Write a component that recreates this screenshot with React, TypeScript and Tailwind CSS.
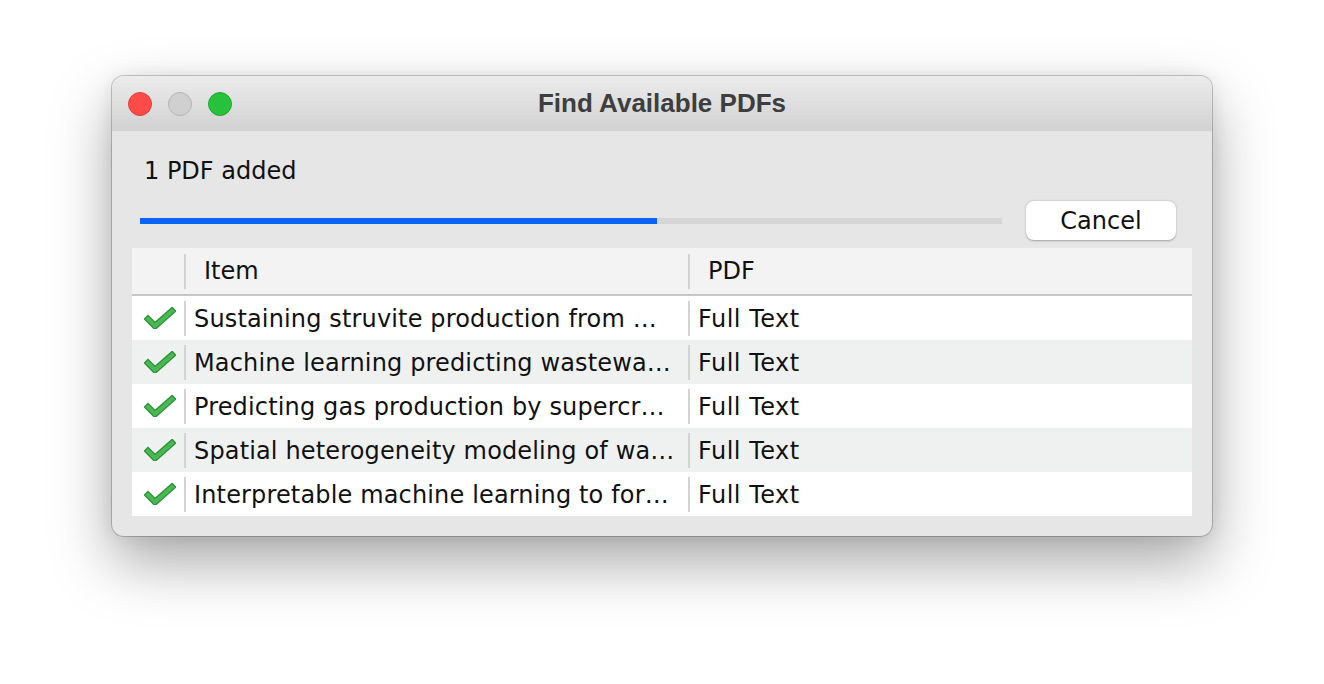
import React from 'react';

const rows = [
  'Sustaining struvite production from …',
  'Machine learning predicting wastewa…',
  'Predicting gas production by supercr…',
  'Spatial heterogeneity modeling of wa…',
  'Interpretable machine learning to for…',
];

function Check() {
  return (
    <svg width="32" height="22" viewBox="0 0 32 22" fill="none">
      <polyline points="4,12 11,19 28,4" stroke="#2b8f37" strokeWidth="6.5" strokeLinejoin="miter" strokeLinecap="square" />
      <polyline points="4,12 11,19 28,4" stroke="#47b852" strokeWidth="4" strokeLinejoin="miter" strokeLinecap="square" />
    </svg>
  );
}

function Sep() {
  return <div className="w-[2px] h-[35px] bg-[#d3d3d3] self-center shrink-0" />;
}

export default function App() {
  return (
    <div className="min-h-screen bg-white flex justify-center pt-[76px]" style={{ fontFamily: '"DejaVu Sans", sans-serif' }}>
      <div className="w-[1100px] h-[460px] rounded-[12px] overflow-hidden bg-[#e6e6e6] flex flex-col shadow-[0_0_0_1px_rgba(0,0,0,0.2),0_26px_60px_rgba(0,0,0,0.35),0_0_18px_rgba(0,0,0,0.08)]">
        {/* title bar */}
        <div className="h-[55px] shrink-0 grid grid-cols-[1fr_auto_1fr] items-center bg-gradient-to-b from-[#ececec] to-[#d1d1d1]">
          <div className="flex items-center gap-4 pl-4">
            <span className="w-6 h-6 rounded-full bg-[#fe4b47] border border-[#e0403b]" />
            <span className="w-6 h-6 rounded-full bg-[#d0d0d0] border border-[#b5b5b5]" />
            <span className="w-6 h-6 rounded-full bg-[#28c13c] border border-[#20a832]" />
          </div>
          <div className="text-[26px] font-bold text-[#3e3e3e]" style={{ fontFamily: '"Liberation Sans", Arial, sans-serif' }}>
            Find Available PDFs
          </div>
          <div />
        </div>

        {/* body */}
        <div className="flex flex-col px-5 pb-5 text-[24px] text-[#111]">
          <div className="mt-[26px] pl-3 leading-[28px]">1 PDF added</div>

          <div className="mt-4 h-[39px] flex items-center pl-2 pr-4 gap-6">
            <div className="flex-1 h-[6px] bg-[#d6d6d6]">
              <div className="h-full w-[60%] bg-[#0a63f5]" />
            </div>
            <button className="w-[150px] h-[39px] bg-white rounded-[8px] shadow-[0_0.5px_2px_rgba(0,0,0,0.3)] leading-none text-[#111]">
              Cancel
            </button>
          </div>

          <div className="mt-2 flex flex-col">
            <div className="h-[48px] flex bg-[#f3f3f3] border-b-2 border-[#c6c6c6]">
              <div className="w-[52px] shrink-0" />
              <Sep />
              <div className="w-[502px] shrink-0 pl-[18px] flex items-center">Item</div>
              <Sep />
              <div className="flex-1 pl-[18px] flex items-center">PDF</div>
            </div>
            {rows.map((r, i) => (
              <div key={i} className={`h-[44px] flex ${i % 2 === 1 ? 'bg-[#eff1f1]' : 'bg-white'}`}>
                <div className="w-[52px] shrink-0 flex items-center justify-center pl-1">
                  <Check />
                </div>
                <Sep />
                <div className="w-[502px] shrink-0 pl-2 pt-px flex items-center overflow-hidden whitespace-nowrap tracking-[0.15px]">{r}</div>
                <Sep />
                <div className="flex-1 pl-2 pt-px flex items-center tracking-[0.5px]">Full Text</div>
              </div>
            ))}
          </div>
        </div>
      </div>
    </div>
  );
}
